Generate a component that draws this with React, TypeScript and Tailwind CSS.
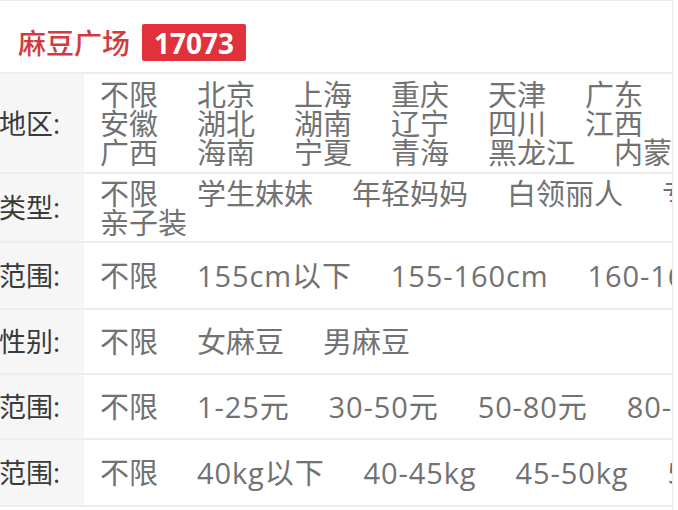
import React from "react";

type Row = {
  label: string;
  lines: string[][];
  height: string;
};

const rows: Row[] = [
  {
    label: "所在地区:",
    height: "h-[100px]",
    lines: [
      ["不限", "北京", "上海", "重庆", "天津", "广东"],
      ["安徽", "湖北", "湖南", "辽宁", "四川", "江西"],
      ["广西", "海南", "宁夏", "青海", "黑龙江", "内蒙古"],
    ],
  },
  {
    label: "麻豆类型:",
    height: "h-[69px]",
    lines: [
      ["不限", "学生妹妹", "年轻妈妈", "白领丽人", "专业模特"],
      ["亲子装"],
    ],
  },
  {
    label: "身高范围:",
    height: "h-[67px]",
    lines: [["不限", "155cm以下", "155-160cm", "160-165cm"]],
  },
  {
    label: "麻豆性别:",
    height: "h-[65px]",
    lines: [["不限", "女麻豆", "男麻豆"]],
  },
  {
    label: "价格范围:",
    height: "h-[65px]",
    lines: [["不限", "1-25元", "30-50元", "50-80元", "80-120元"]],
  },
  {
    label: "体重范围:",
    height: "h-[67px]",
    lines: [["不限", "40kg以下", "40-45kg", "45-50kg", "50-55kg"]],
  },
];

export default function App() {
  return (
    <div className="h-[510px] w-[678px] overflow-hidden bg-white font-['Open_Sans','Noto_Sans_CJK_SC',sans-serif]">
      <div className="h-[510px] w-[673px] overflow-hidden border-r border-t border-[#ececec]">
        {/* Header */}
        <div className="flex h-[71px] items-center gap-[12px] pl-[18px] pt-[12px]">
          <span className="text-[28px] font-medium leading-none text-[#d23a41]">
            麻豆广场
          </span>
          <span className="flex h-[37px] items-center rounded-[2px] bg-[#e1323c] px-[12px] text-[28px] font-bold leading-none text-white">
            17073
          </span>
        </div>

        {/* Filter table */}
        <div className="border-t-2 border-[#ececec]">
          {rows.map((row) => (
            <FilterRow key={row.label} row={row} />
          ))}
        </div>
      </div>
    </div>
  );
}

function FilterRow({ row }: { row: Row }) {
  return (
    <div className={`flex ${row.height} border-b-2 border-[#ededed]`}>
      <div className="flex w-[84px] shrink-0 items-center justify-end overflow-hidden whitespace-nowrap bg-[#f6f6f6] pr-[24px] text-[27px] leading-none text-[#3a3a3a]">
        {row.label}
      </div>
      <div className="flex min-w-0 flex-1 flex-col justify-center pl-[16px] text-[29px] leading-[29px] text-[#727272]">
        {row.lines.map((line, i) => (
          <div key={i} className="flex gap-[39px] whitespace-nowrap">
            {line.map((item) => (
              <span
                key={item}
                className={/[0-9]/.test(item) ? "tracking-[0.9px]" : ""}
              >
                {item}
              </span>
            ))}
          </div>
        ))}
      </div>
    </div>
  );
}
